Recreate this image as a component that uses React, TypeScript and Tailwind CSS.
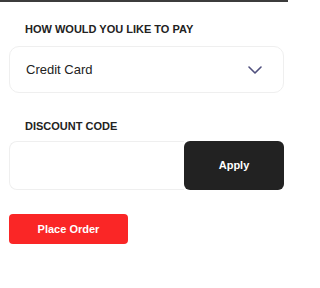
const Chevron = () => (
  <svg width="14" height="8" viewBox="0 0 14 8" fill="none">
    <path d="M1 1l6 6 6-6" stroke="#50507e" strokeWidth="1.6" strokeLinecap="round" strokeLinejoin="round" />
  </svg>
);

const App = () => {
  return (
    <div className="w-[288px] h-[288px] bg-white border-t-2 border-[#3c3c3c] font-['Liberation_Sans',Arial,sans-serif] text-[#222]">
      <div className="pl-[9px] pr-[4px]">
        <div className="pt-[19px] pl-4 text-[11px] leading-4 font-bold uppercase">How would you like to pay</div>
        <div className="mt-[9px] h-[47px] flex items-center justify-between border border-[#efefef] rounded-[10px] pl-[16px] pr-[21px]">
          <span className="text-[13px]">Credit Card</span>
          <Chevron />
        </div>

        <div className="mt-[25px] pl-4 text-[11px] leading-4 font-bold uppercase">Discount code</div>
        <div className="mt-[7px] flex h-[49px]">
          <input className="flex-1 min-w-0 border border-[#efefef] border-r-0 rounded-l-[8px] outline-none px-3 text-[13px]" />
          <button className="w-[100px] bg-[#222] text-white text-[11px] font-bold rounded-[6px]">Apply</button>
        </div>

        <button className="mt-[24px] w-[119px] h-[30px] bg-[#fa2626] text-white text-[11px] font-bold rounded-[4px]">Place Order</button>
      </div>
    </div>
  );
};

export default App;
